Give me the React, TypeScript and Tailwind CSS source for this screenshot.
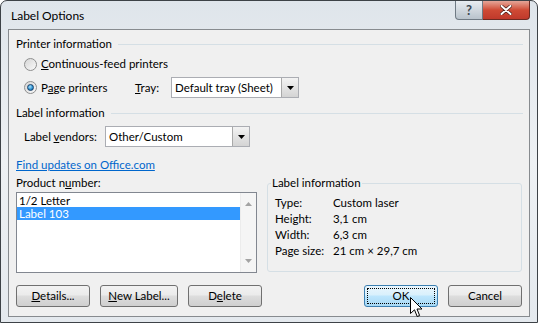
import React from 'react';

const Radio = ({ checked }: { checked?: boolean }) => (
  <span className="w-[13px] h-[13px] rounded-full border border-[#8e8f8f] bg-gradient-to-br from-[#d6d6d6] to-[#fafafa] flex items-center justify-center shrink-0">
    {checked && (
      <span className="w-[7px] h-[7px] rounded-full border border-[#17406a] bg-[radial-gradient(circle_at_40%_35%,#a8e0fb,#2a8fcf_60%,#145d93)]" />
    )}
  </span>
);

const DropArrow = () => (
  <span className="w-[17px] h-full border-l border-[#a9a9a9] bg-gradient-to-b from-[#f3f3f3] to-[#d4d4d4] flex items-center justify-center">
    <svg width="7" height="4" viewBox="0 0 7 4">
      <path d="M0 0 H7 L3.5 4 Z" fill="#000" />
    </svg>
  </span>
);

const Button = ({ children, className }: { children: React.ReactNode; className: string }) => (
  <div
    className={
      'h-[22px] rounded-[3px] border border-[#707070] bg-[linear-gradient(#f2f2f2_0%,#ebebeb_45%,#dddddd_50%,#cfcfcf_100%)] flex items-center justify-center ' +
      className
    }
  >
    {children}
  </div>
);

const GroupHeader = ({ text }: { text: string }) => (
  <div className="h-[16px] flex items-center pl-[7px] pr-[6px]">
    <span>{text}</span>
    <span className="flex-1 h-px bg-[#d5dfe5] ml-[6px]" />
  </div>
);

const info = [
  ['Type:', 'Custom laser'],
  ['Height:', '3,1 cm'],
  ['Width:', '6,3 cm'],
  ['Page size:', '21 cm × 29,7 cm'],
];

export default function App() {
  return (
    <div className="w-[538px] h-[323px] relative overflow-hidden whitespace-nowrap bg-white font-['Segoe_UI','Lato',sans-serif] text-[11.5px] leading-[16px] text-black">
      <div className="h-full rounded-t-[7px] border border-[#3d4247] flex flex-col px-[7px] pb-[5px] bg-gradient-to-b from-[#dfe5eb] via-[#eef1f4] to-[#e4e9ee]">
        {/* title bar */}
        <div className="h-[28px] flex items-start justify-between shrink-0">
          <span className="pl-[3px] pt-[7px] text-[12px]">Label Options</span>
          <div className="flex">
            <div className="w-[28px] h-[19px] rounded-bl-[4px] border border-t-0 border-[#6f7a84] bg-gradient-to-b from-[#e9edf1] to-[#b9c3cc] flex items-center justify-center text-[#3b4651] text-[13px] font-bold">
              ?
            </div>
            <div className="w-[47px] h-[19px] rounded-br-[4px] border border-t-0 border-l-0 border-[#6d2a22] bg-gradient-to-b from-[#e4a598] via-[#cf4a35] to-[#c0392b] flex items-center justify-center">
              <svg width="12" height="10" viewBox="0 0 12 10">
                <path d="M1.5 1 L10.5 9 M10.5 1 L1.5 9" stroke="#4a1d17" strokeWidth="3.4" strokeLinecap="round" />
                <path d="M1.5 1 L10.5 9 M10.5 1 L1.5 9" stroke="#fff" strokeWidth="2" strokeLinecap="round" />
              </svg>
            </div>
          </div>
        </div>

        {/* client area */}
        <div className="flex-1 border border-[#878b8f] bg-[#f0f0f0] flex flex-col">
          <div className="mt-[6px]">
            <GroupHeader text="Printer information" />
          </div>
          <div className="mt-[4px] h-[16px] flex items-center pl-[15px] gap-[4px]">
            <Radio />
            <span>
              <u>C</u>ontinuous-feed printers
            </span>
          </div>
          <div className="mt-[5px] h-[21px] flex items-center pl-[15px]">
            <Radio checked />
            <span className="ml-[4px] w-[94px]">
              P<u>a</u>ge printers
            </span>
            <span className="w-[36px]">
              <u>T</u>ray:
            </span>
            <div className="w-[128px] h-[21px] border border-[#abadb3] bg-white flex items-center justify-between">
              <span className="pl-[3px]">Default tray (Sheet)</span>
              <DropArrow />
            </div>
          </div>

          <div className="mt-[7px]">
            <GroupHeader text="Label information" />
          </div>
          <div className="mt-[5px] h-[21px] flex items-center pl-[15px]">
            <span className="w-[81px]">
              Label <u>v</u>endors:
            </span>
            <div className="w-[145px] h-[21px] border border-[#abadb3] bg-white flex items-center justify-between">
              <span className="pl-[3px]">Other/Custom</span>
              <DropArrow />
            </div>
          </div>

          <div className="mt-[10px] h-[16px] pl-[7px]">
            <span className="text-[#0066cc] underline">Find updates on Office.com</span>
          </div>

          <div className="mt-[2px] flex pl-[7px]">
            <div className="w-[241px] flex flex-col">
              <span className="h-[16px]">
                Product n<u>u</u>mber:
              </span>
              <div className="mt-[1px] h-[81px] border border-[#828790] bg-white flex">
                <div className="flex-1 pt-[1px]">
                  <div className="h-[13px] leading-[13px] pl-[2px]">1/2 Letter</div>
                  <div className="h-[13px] leading-[13px] pl-[2px] bg-[#3399ff] text-white">Label 103</div>
                </div>
                <div className="w-[16px] bg-[#f5f5f5] border-l border-[#ececec] flex flex-col justify-between items-center py-[9px]">
                  <svg width="7" height="4" viewBox="0 0 7 4">
                    <path d="M0 4 H7 L3.5 0 Z" fill="#a3a3a3" />
                  </svg>
                  <svg width="7" height="4" viewBox="0 0 7 4">
                    <path d="M0 0 H7 L3.5 4 Z" fill="#a3a3a3" />
                  </svg>
                </div>
              </div>
            </div>
            <fieldset className="ml-[10px] w-[255px] h-[97px] border border-[#d5dfe5] rounded-[3px] pl-[3px]">
              <legend className="px-[1px] leading-[16px]">Label information</legend>
              <div className="mt-[4px] pl-[4px]">
                {info.map(([k, v]) => (
                  <div key={k} className="h-[16px] flex">
                    <span className="w-[58px]">{k}</span>
                    <span>{v}</span>
                  </div>
                ))}
              </div>
            </fieldset>
          </div>

          <div className="mt-[12px] flex pl-[7px] pr-[7px]">
            <Button className="w-[74px]">
              <span>
                <u>D</u>etails...
              </span>
            </Button>
            <Button className="w-[78px] ml-[10px]">
              <span>
                <u>N</u>ew Label...
              </span>
            </Button>
            <Button className="w-[74px] ml-[10px]">
              <span>
                D<u>e</u>lete
              </span>
            </Button>
            <div className="flex-1" />
            <div className="w-[74px] h-[22px] rounded-[3px] border border-[#3c7fb1] bg-[linear-gradient(#eaf6fd_0%,#d9f0fc_45%,#bee6fd_50%,#a7d9f5_100%)] p-[2px]">
              <div className="h-full border border-dotted border-black flex items-center justify-center">OK</div>
            </div>
            <Button className="w-[74px] ml-[10px]">
              <span>Cancel</span>
            </Button>
          </div>
        </div>
      </div>

      {/* mouse pointer */}
      <svg className="absolute left-[410px] top-[297px]" width="13" height="21" viewBox="0 0 13 21">
        <path d="M0.5 0.5 V16.5 L4.5 12.8 L7.2 19.5 L9.6 18.5 L7 12 H12 Z" fill="#fff" stroke="#000" strokeWidth="1" strokeLinejoin="round" />
      </svg>
    </div>
  );
}
